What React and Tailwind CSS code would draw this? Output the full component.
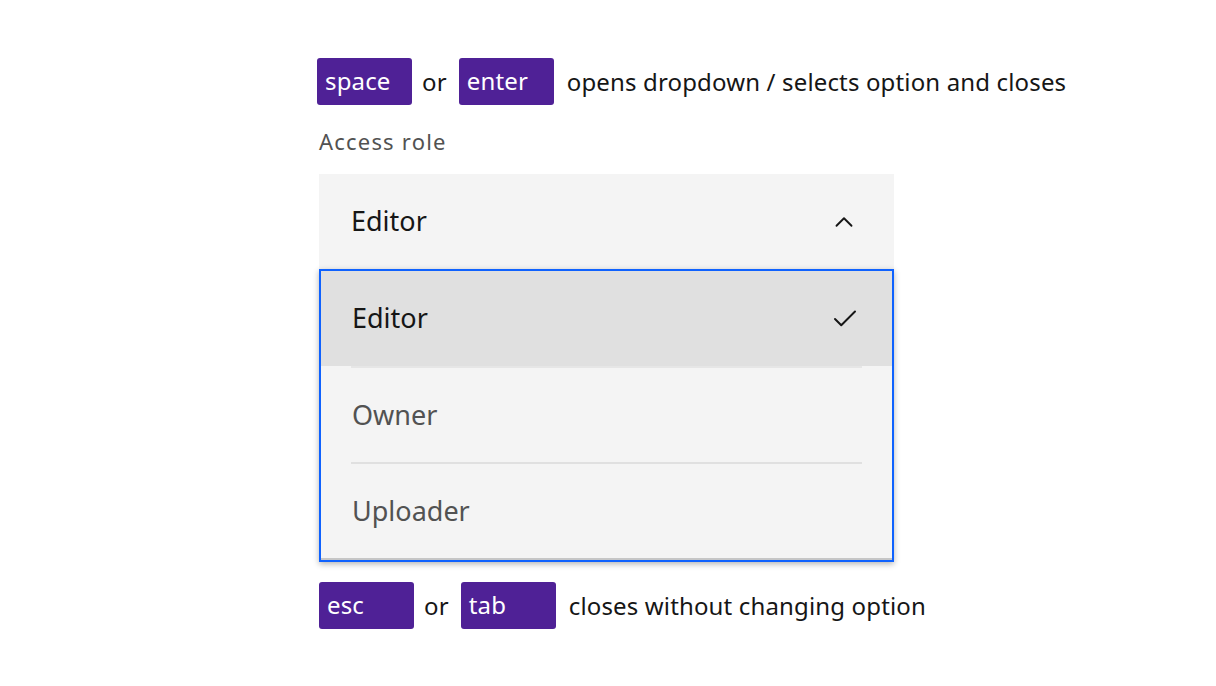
import { Check, ChevronUp } from "lucide-react";

function Key({ children }) {
  return (
    <span className="shrink-0 flex items-center w-[95px] h-[47px] rounded-[3px] bg-[#4f2196] text-white text-[24px] pl-[8px] pb-[2px]">
      {children}
    </span>
  );
}

export default function App() {
  const options = ["Editor", "Owner", "Uploader"];

  return (
    <div
      className="min-h-screen bg-white pt-[58px] text-[#161616]"
      style={{ fontFamily: "'Noto Sans', 'Open Sans', sans-serif" }}
    >
      <div className="w-[575px] ml-[319px]">
        {/* keys: open / select */}
        <div className="flex items-center -ml-[2px] text-[24px] tracking-[0.15px] whitespace-nowrap">
          <Key>space</Key>
          <span className="ml-[10px] mr-[12px]">or</span>
          <Key>enter</Key>
          <span className="ml-[13px]">opens dropdown / selects option and closes</span>
        </div>

        <div className="mt-[23px] text-[22px] leading-[26px] text-[#525252] tracking-[1.2px]">
          Access role
        </div>

        {/* field */}
        <div className="mt-[20px] h-[95px] bg-[#f4f4f4] flex items-center justify-between pl-[32px] pr-[35px]">
          <span className="text-[27px]">Editor</span>
          <ChevronUp size={30} strokeWidth={1.5} />
        </div>

        {/* menu */}
        <div className="border-2 border-[#0f62fe] bg-[#f4f4f4] shadow-[0_2px_6px_rgba(0,0,0,0.3)]">
          {options.map((opt, i) => (
            <div key={opt} className={i === 0 ? "bg-[#e0e0e0]" : ""}>
              <div
                className={
                  "mx-[30px] flex items-center justify-between " +
                  (i === 0 ? "h-[95px]" : "h-[96px] border-t-2 " + (i === 1 ? "border-[#e6e6e6]" : "border-[#e0e0e0]"))
                }
              >
                <span className={i === 0 ? "text-[27px] text-[#161616] pl-[1px]" : "text-[27px] text-[#525252] pl-[1px]"}>
                  {opt}
                </span>
                {i === 0 && <Check size={30} strokeWidth={1.6} className="mr-[2px]" />}
              </div>
            </div>
          ))}
          <div className="h-[2px] bg-[#c6c6c6]" />
        </div>

        {/* keys: close */}
        <div className="mt-[20px] flex items-center text-[24px] tracking-[0.15px] whitespace-nowrap">
          <Key>esc</Key>
          <span className="ml-[10px] mr-[12px]">or</span>
          <Key>tab</Key>
          <span className="ml-[13px]">closes without changing option</span>
        </div>
      </div>
    </div>
  );
}
